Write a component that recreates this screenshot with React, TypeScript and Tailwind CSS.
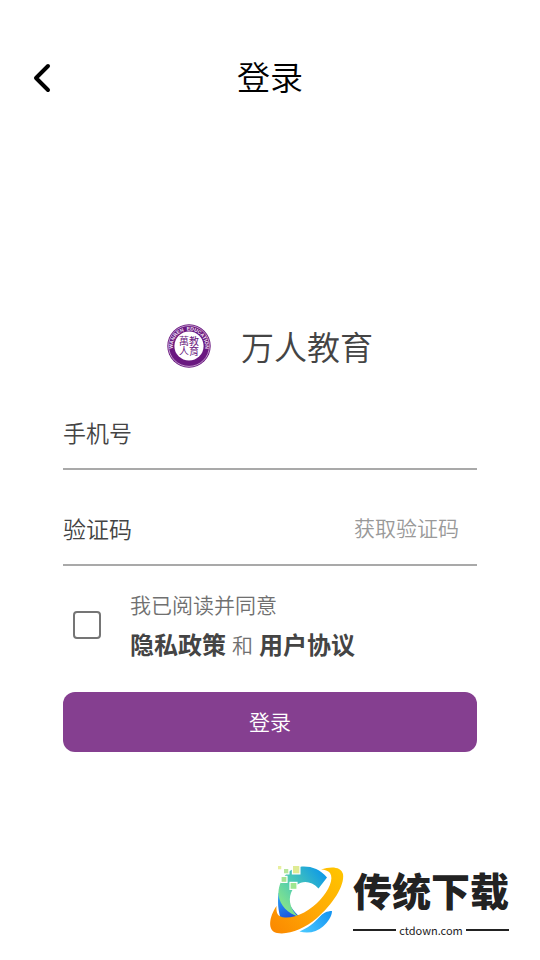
import React, { useState } from 'react'

function Emblem() {
  return (
    <svg viewBox="0 0 44 44" className="size-11 shrink-0" aria-hidden="true">
      <defs>
        <path id="ring-text" d="M6.4 27 A16.2 16.2 0 1 1 37.6 27" />
      </defs>
      <circle cx="22" cy="22" r="21.7" fill="#6a1880" />
      <circle cx="22" cy="22" r="20.4" fill="none" stroke="#e3cfe8" strokeWidth="0.7" />
      <circle cx="22" cy="22" r="14.6" fill="#fff" />
      <text fill="#f3e8f6" fontSize="5" fontWeight="700" fontFamily="Liberation Sans, sans-serif">
        <textPath href="#ring-text" startOffset="50%" textAnchor="middle" xmlSpace="preserve">
          WANREN  EDUCATION
        </textPath>
      </text>
      <g fill="#6a1880" fontSize="10" fontWeight="400" fontFamily="Noto Sans CJK TC, sans-serif" textAnchor="middle">
        <text x="17" y="20.5">萬</text>
        <text x="27" y="20.5">教</text>
        <text x="17" y="31">人</text>
        <text x="27" y="31">育</text>
      </g>
    </svg>
  )
}

function SiteLogo() {
  return (
    <svg viewBox="0 0 100 90" className="h-[90px] w-[100px] shrink-0" aria-hidden="true">
      <defs>
        <linearGradient id="arc" x1="22" y1="52" x2="64" y2="20" gradientUnits="userSpaceOnUse">
          <stop offset="0" stopColor="#86e58a" />
          <stop offset="0.45" stopColor="#4bc9b4" />
          <stop offset="1" stopColor="#109be6" />
        </linearGradient>
        <linearGradient id="deep" x1="18" y1="40" x2="30" y2="64" gradientUnits="userSpaceOnUse">
          <stop offset="0" stopColor="#2aa5f5" />
          <stop offset="1" stopColor="#1c4fdc" />
        </linearGradient>
        <linearGradient id="orbit" x1="80" y1="14" x2="14" y2="76" gradientUnits="userSpaceOnUse">
          <stop offset="0" stopColor="#ffc400" />
          <stop offset="0.5" stopColor="#ffaa05" />
          <stop offset="1" stopColor="#fb8a00" />
        </linearGradient>
        <linearGradient id="tail" x1="42" y1="76" x2="70" y2="58" gradientUnits="userSpaceOnUse">
          <stop offset="0" stopColor="#49c8ff" />
          <stop offset="1" stopColor="#1796f2" />
        </linearGradient>
      </defs>
      <path d="M18.5 38 C17.5 47 18 55 21 65 L30 66 L40 62 C33 56 28 49 24 36 Z" fill="url(#deep)" />
      <path d="M67 22.5 C60 14 51 11 42 11.5 C28 13 18 25 18.5 40 C20 51 28 58 38.5 62 C31 55 28 46 31 38 C35 27 48 22 58.5 33.5 Z" fill="url(#arc)" />
      <path d="M61 14.5 C71 11 81 11.5 83 19 C85 31 72 50 57 63 C44 74 29 80 17 78 C7 76 9 62 16.5 51 C16 59 18 62 25 62.500 C37 63 51 55 60 45 C69 35 74 24 70 18 C68 16 65 14.500 61 14.5 Z" fill="url(#orbit)" />
      <path d="M72 56 C67 56 63 58 59 62.5 C54 68 48 73 39.5 76.5 C48 79 57 77 63 71.5 C68 67 72 61 72 56 Z" fill="url(#tail)" />
      <g stroke="#fff" strokeWidth="1.2">
        <rect x="17.4" y="10.4" width="4.5" height="4.5" fill="#e8ef9f" />
        <rect x="23.4" y="13.4" width="5.5" height="5.5" fill="#b5e69a" />
        <rect x="32.4" y="10.4" width="7.5" height="8.5" fill="#dfeb93" />
        <rect x="21" y="21.4" width="6" height="6" fill="#a6e392" />
        <rect x="30" y="27.4" width="7" height="7" fill="#9ee690" />
      </g>
    </svg>
  )
}

export default function App() {
  const [phone, setPhone] = useState('')
  const [code, setCode] = useState('')
  const [agreed, setAgreed] = useState(false)

  return (
    <div className="flex min-h-screen flex-col bg-white font-['Noto_Sans_CJK_SC',sans-serif] font-[350] text-[#444444]">
      <header className="grid grid-cols-[1fr_auto_1fr] items-center px-6 pt-12">
        <button type="button" aria-label="返回" className="flex size-9 items-center justify-center">
          <svg viewBox="0 0 20 32" className="h-8 w-5" fill="none" stroke="#000" strokeWidth="4" strokeLinecap="round" strokeLinejoin="round">
            <path d="M16 4 L4 16 L16 28" />
          </svg>
        </button>
        <h1 className="pb-1 text-[33px] leading-14 text-black">登录</h1>
      </header>

      <main className="px-[63px] pt-52">
        <div className="flex items-center justify-center gap-[30px]">
          <Emblem />
          <p className="text-[33px] leading-[60px]">万人教育</p>
        </div>

        <form onSubmit={(e) => e.preventDefault()}>
          <div className="mt-5 flex h-[74px] items-center border-b-2 border-[#a9a9a9]">
            <label htmlFor="phone" className="text-[23px]">手机号</label>
            <input
              id="phone"
              type="tel"
              value={phone}
              onChange={(e) => setPhone(e.target.value)}
              className="ml-4 min-w-0 flex-1 text-[23px] outline-none"
            />
          </div>

          <div className="mt-[22px] flex h-[74px] items-center border-b-2 border-[#a9a9a9]">
            <label htmlFor="code" className="text-[23px]">验证码</label>
            <input
              id="code"
              type="text"
              inputMode="numeric"
              value={code}
              onChange={(e) => setCode(e.target.value)}
              className="mx-4 min-w-0 flex-1 text-[23px] outline-none"
            />
            <button type="button" className="mr-[18px] text-[21px] text-[#999999]">获取验证码</button>
          </div>

          <div className="mt-5 flex items-center gap-[29px] pl-[10px]">
            <input
              id="agree"
              type="checkbox"
              checked={agreed}
              onChange={(e) => setAgreed(e.target.checked)}
              className="size-7 shrink-0 appearance-none rounded-sm border-2 border-[#757575] checked:bg-[#853f90]"
            />
            <div className="text-[21px] text-[#707070]">
              <label htmlFor="agree" className="block leading-9">我已阅读并同意</label>
              <p className="flex items-center gap-[6px] pt-[2px] leading-10">
                <a href="#privacy" className="text-2xl leading-10 font-bold text-[#444444]">隐私政策</a>
                和
                <a href="#terms" className="text-2xl leading-10 font-bold text-[#444444]">用户协议</a>
              </p>
            </div>
          </div>

          <button type="submit" className="mt-7 h-[60px] w-full rounded-xl bg-[#853f90] text-[21px] text-white">
            登录
          </button>
        </form>
      </main>

      <footer className="mt-auto flex justify-end pr-[31px] pb-[15px] text-[#222222]">
        <SiteLogo />
        <div className="-ml-[7px] flex flex-col pt-1">
          <p className="pb-1 text-[39px] leading-[60px] font-black">传统下载</p>
          <div className="flex items-center gap-[3px]">
            <span className="h-[2px] flex-1 bg-[#222222]" />
            <span className="text-[11px] leading-[14px] font-normal">ctdown.com</span>
            <span className="h-[2px] flex-1 bg-[#222222]" />
          </div>
        </div>
      </footer>
    </div>
  )
}
